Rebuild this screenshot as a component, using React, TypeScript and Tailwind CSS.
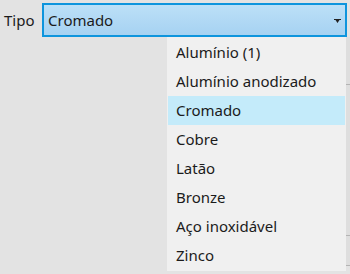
const options = [
  'Alumínio (1)',
  'Alumínio anodizado',
  'Cromado',
  'Cobre',
  'Latão',
  'Bronze',
  'Aço inoxidável',
  'Zinco',
];

const selected = 'Cromado';

export default function App() {
  return (
    <div className="relative w-[350px] h-[274px] overflow-hidden bg-[#e3e3e3] text-[#1b1b1b] font-['Noto_Sans',sans-serif] text-[15px]">
      <div className="flex items-center pt-[3px]">
        <span className="w-[42px] pl-[4px] leading-[34px]">Tipo</span>
        <div className="flex h-[34px] w-[305px] items-center border-2 border-[#0e95dd] bg-gradient-to-b from-[#bce0f7] to-[#a6d2f2] pl-[4px] pr-[4px]">
          <span className="flex-1">{selected}</span>
          <svg width="7" height="4" viewBox="0 0 7 4" className="mt-[1px]">
            <path d="M0 0h7v1H5.5L3.5 4 1.5 1H0z" fill="#222" />
          </svg>
        </div>
      </div>

      {/* panel behind the menu: only its right edge shows */}
      <div className="ml-[346px] bg-[#dedede]">
        <div className="h-[48px] border-b border-[#b4b4b4]" />
        <div className="h-[151px] border-b border-[#b4b4b4]" />
        <div className="h-[30px] border-b border-[#b4b4b4]" />
      </div>

      <div className="absolute left-[167px] top-[37px] w-[179px] bg-[#f0f0f0] py-[1px]">
        {options.map((opt) => (
          <div
            key={opt}
            className={
              opt === selected
                ? 'mx-[1px] flex h-[29px] items-center bg-[#c4ebfa] pl-[8px]'
                : 'mx-[1px] flex h-[29px] items-center pl-[8px]'
            }
          >
            {opt}
          </div>
        ))}
      </div>
    </div>
  );
}
